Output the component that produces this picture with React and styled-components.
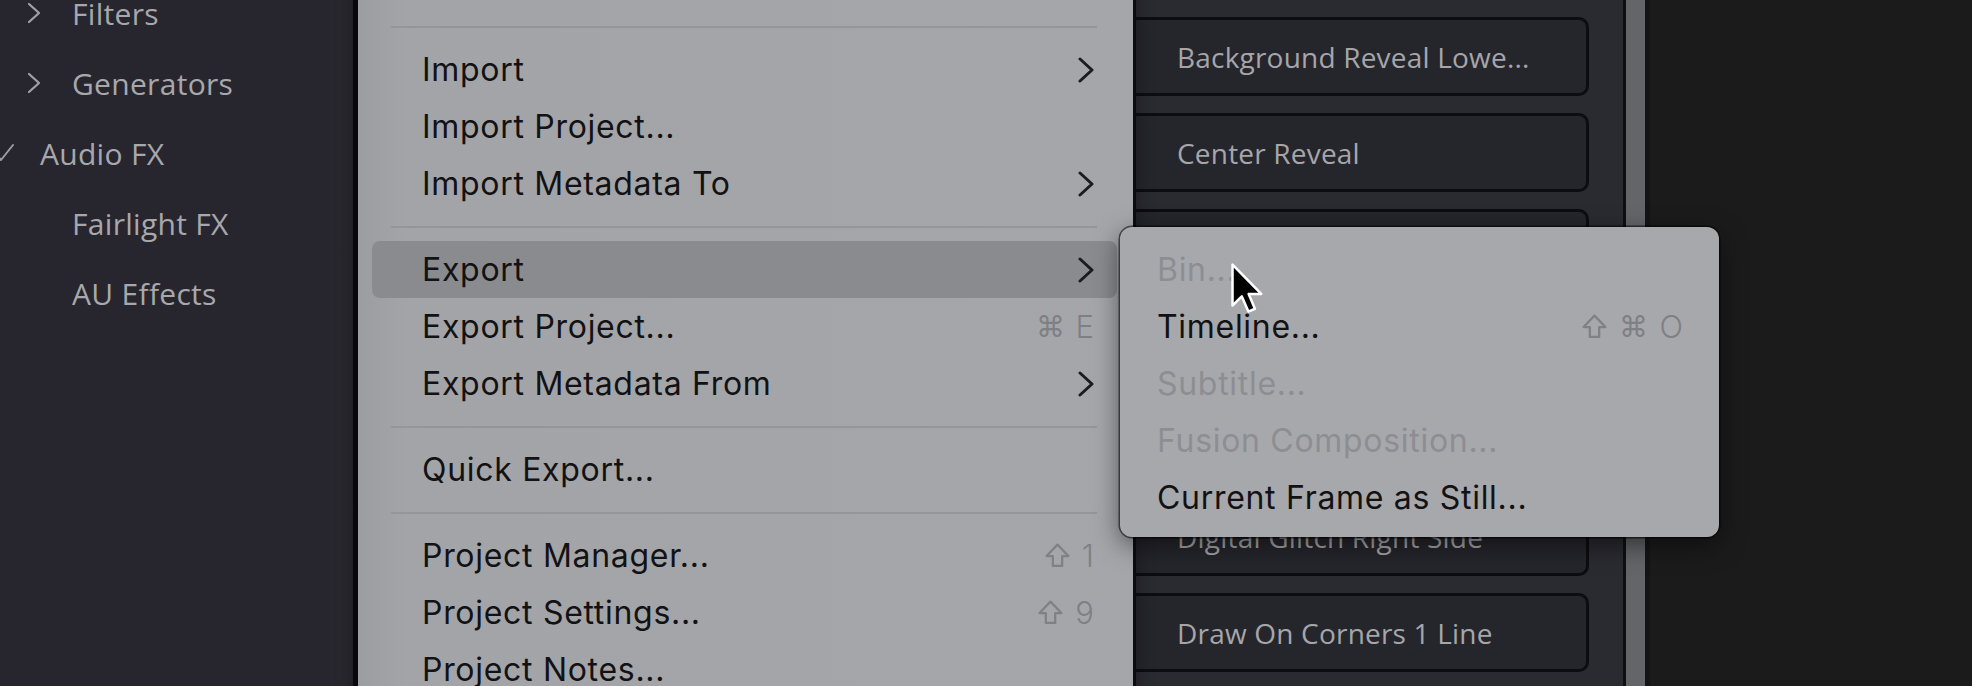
import styled, { createGlobalStyle } from "styled-components";

const GlobalStyle = createGlobalStyle`
  html, body {
    margin: 0;
    padding: 0;
    background: #1b1b1b;
  }
  * {
    box-sizing: border-box;
  }
`;

const SIDEBAR = [
  { label: "Filters", level: 1, icon: "chevron" },
  { label: "Generators", level: 1, icon: "chevron" },
  { label: "Audio FX", level: 0, icon: "check" },
  { label: "Fairlight FX", level: 1 },
  { label: "AU Effects", level: 1 },
];

const CARDS = [
  "Background Reveal Lowe...",
  "Center Reveal",
  "Digital Glitch Left Side",
  "Digital Glitch Lower Third",
  "Digital Glitch Reveal",
  "Digital Glitch Right Side",
  "Draw On Corners 1 Line",
  "Draw On Corners 2 Lines",
];

const MENU = [
  { type: "sep" },
  { label: "Import", submenu: true },
  { label: "Import Project..." },
  { label: "Import Metadata To", submenu: true },
  { type: "sep" },
  { label: "Export", submenu: true, active: true },
  { label: "Export Project...", keys: ["⌘", "E"] },
  { label: "Export Metadata From", submenu: true },
  { type: "sep" },
  { label: "Quick Export..." },
  { type: "sep" },
  { label: "Project Manager...", keys: ["shift", "1"] },
  { label: "Project Settings...", keys: ["shift", "9"] },
  { label: "Project Notes..." },
];

const EXPORT_MENU = [
  { label: "Bin...", disabled: true },
  { label: "Timeline...", keys: ["shift", "⌘", "O"] },
  { label: "Subtitle...", disabled: true },
  { label: "Fusion Composition...", disabled: true },
  { label: "Current Frame as Still..." },
];

function Chevron({ color = "#1c1c1e", w = 16, h = 26, stroke = 3 }) {
  return (
    <svg width={w} height={h} viewBox={`0 0 ${w} ${h}`}>
      <polyline
        points={`2,2 ${w - 2},${h / 2} 2,${h - 2}`}
        fill="none"
        stroke={color}
        strokeWidth={stroke}
        strokeLinecap="round"
        strokeLinejoin="round"
      />
    </svg>
  );
}

function Check() {
  return (
    <svg width="24" height="20" viewBox="0 0 24 20">
      <polyline
        points="6,11 11,17 23,2"
        fill="none"
        stroke="#9d9da1"
        strokeWidth="2"
        strokeLinecap="round"
        strokeLinejoin="round"
      />
    </svg>
  );
}

// outlined shift arrow, as drawn in macOS menus
function ShiftIcon() {
  return (
    <svg width="27" height="27" viewBox="0 0 26 26" aria-label="Shift">
      <path
        d="M13,2.5 L23.5,13.5 L17.5,13.5 L17.5,23 L8.5,23 L8.5,13.5 L2.5,13.5 Z"
        fill="none"
        stroke="#808185"
        strokeWidth="2.2"
        strokeLinejoin="round"
      />
    </svg>
  );
}

function Pointer() {
  return (
    <Cursor width="34" height="52" viewBox="-1 -1 13.5 20.5">
      <path
        d="M0,0 L0,16.2 L3.7,12.6 L6.3,18.6 L8.9,17.5 L6.4,11.6 L11.4,11.6 Z"
        fill="#000"
        stroke="#fff"
        strokeWidth="1"
        strokeLinejoin="round"
      />
    </Cursor>
  );
}

function Keys({ keys }) {
  return (
    <Shortcut>
      {keys.map((k, i) =>
        k === "shift" ? (
          <ShiftIcon key={i} />
        ) : (
          <Key key={i} $glyph={k === "⌘"}>
            {k}
          </Key>
        )
      )}
    </Shortcut>
  );
}

export default function App() {
  return (
    <>
      <GlobalStyle />
      <Page>
        <Sidebar>
          <TreeList>
            {SIDEBAR.map((item) => (
              <TreeRow key={item.label} $level={item.level}>
                <TreeIcon>
                  {item.icon === "chevron" && (
                    <Chevron color="#a2a2a6" w={14} h={22} stroke={2.2} />
                  )}
                  {item.icon === "check" && <Check />}
                </TreeIcon>
                <TreeLabel>{item.label}</TreeLabel>
              </TreeRow>
            ))}
          </TreeList>
        </Sidebar>

        <MiddlePane />

        <EffectsPanel>
          {CARDS.map((name) => (
            <Card key={name}>{name}</Card>
          ))}
        </EffectsPanel>
        <ScrollTrack />
        <Viewer />

        <Menu>
          {MENU.map((item, i) =>
            item.type === "sep" ? (
              <Separator key={i} />
            ) : (
              <MenuRow key={i} $active={item.active}>
                <span>{item.label}</span>
                {item.submenu && <Chevron />}
                {item.keys && <Keys keys={item.keys} />}
              </MenuRow>
            )
          )}
        </Menu>

        <SubMenu>
          {EXPORT_MENU.map((item) => (
            <SubRow key={item.label} $disabled={item.disabled}>
              <span>{item.label}</span>
              {item.keys && <Keys keys={item.keys} />}
            </SubRow>
          ))}
        </SubMenu>

        <Pointer />
      </Page>
    </>
  );
}

const Page = styled.div`
  position: relative;
  width: 1972px;
  height: 686px;
  overflow: hidden;
  display: flex;
  background: #1b1b1b;
`;

const Sidebar = styled.div`
  width: 358px;
  flex-shrink: 0;
  background: linear-gradient(90deg, #27262f 0%, #27262f 91%, #28282d 100%);
  border-right: 5px solid #0b0b0e;
  overflow: hidden;
`;

const TreeList = styled.div`
  display: flex;
  flex-direction: column;
  margin-top: -22px;
  margin-left: -32px;
`;

const TreeRow = styled.div`
  height: 70px;
  display: flex;
  align-items: center;
  gap: 26px;
  padding-left: ${(p) => 22 + p.$level * 32}px;
  font-family: "Open Sans", "Noto Sans", sans-serif;
  font-size: 30px;
  letter-spacing: 0.3px;
  color: #a8a8ac;
`;

const TreeIcon = styled.div`
  width: 24px;
  height: 24px;
  display: flex;
  align-items: center;
  justify-content: center;
`;

const TreeLabel = styled.span`
  white-space: nowrap;
`;

const MiddlePane = styled.div`
  width: 757px;
  flex-shrink: 0;
  background: #1f1f25;
`;

const EffectsPanel = styled.div`
  width: 508px;
  flex-shrink: 0;
  display: flex;
  flex-direction: column;
  gap: 17px;
  padding: 17px 34px 0 0;
  background: #2a2a31;
`;

const Card = styled.div`
  height: 79px;
  flex-shrink: 0;
  display: flex;
  align-items: center;
  padding-left: 59px;
  background: #25252c;
  border: 3px solid #0d0d11;
  border-radius: 10px;
  font-family: "Open Sans", "Noto Sans", sans-serif;
  font-size: 28px;
  letter-spacing: 0.2px;
  color: #a6a6aa;
  white-space: nowrap;
  overflow: hidden;
`;

const ScrollTrack = styled.div`
  width: 27px;
  flex-shrink: 0;
  background: #646569;
  border-left: 3px solid #0f0f12;
  border-right: 5px solid #141416;
`;

const Viewer = styled.div`
  flex: 1;
  background: #1b1b1b;
`;

const Menu = styled.div`
  position: absolute;
  left: 358px;
  top: -40px;
  width: 775px;
  height: 800px;
  padding-top: 52px;
  display: flex;
  flex-direction: column;
  background: linear-gradient(90deg, #9c9da1 0%, #a3a4a8 6%, #a5a6aa 100%);
  box-shadow: 3px 0 0 #0c0c0f, 0 0 20px rgba(0, 0, 0, 0.45);
  font-family: Inter, "Liberation Sans", "DejaVu Sans", sans-serif;
  font-size: 32px;
  letter-spacing: 0.7px;
  color: #121214;
`;

const Separator = styled.div`
  height: 29px;
  flex-shrink: 0;
  display: flex;
  align-items: center;
  padding: 0 36px 0 33px;

  &::after {
    content: "";
    flex: 1;
    height: 2px;
    background: #95969a;
  }
`;

const MenuRow = styled.div`
  height: 57px;
  flex-shrink: 0;
  display: flex;
  align-items: center;
  justify-content: space-between;
  margin: 0 16px 0 14px;
  padding: 0 23px 0 50px;
  border-radius: 8px;
  background: ${(p) => (p.$active ? "#8a8b8f" : "transparent")};
  white-space: nowrap;
`;

const SubMenu = styled.div`
  position: absolute;
  left: 1120px;
  top: 227px;
  width: 599px;
  height: 310px;
  padding-top: 14px;
  display: flex;
  flex-direction: column;
  background: #a7a8ac;
  border-radius: 12px;
  box-shadow: 0 0 0 1.5px rgba(0, 0, 0, 0.55), 0 8px 26px rgba(0, 0, 0, 0.5);
  font-family: Inter, "Liberation Sans", "DejaVu Sans", sans-serif;
  font-size: 32px;
  letter-spacing: 0.7px;
`;

const SubRow = styled.div`
  height: 57px;
  flex-shrink: 0;
  display: flex;
  align-items: center;
  justify-content: space-between;
  padding: 0 36px 0 37px;
  color: ${(p) => (p.$disabled ? "#8d8e92" : "#121214")};
  white-space: nowrap;
`;

const Shortcut = styled.span`
  display: flex;
  align-items: center;
  gap: 11px;
  color: #7f8084;
`;

const Key = styled.span`
  font-family: ${(p) =>
    p.$glyph ? '"DejaVu Sans", sans-serif' : 'Inter, "Liberation Sans", sans-serif'};
  font-size: ${(p) => (p.$glyph ? "29px" : "31px")};
  font-weight: 300;
  letter-spacing: 0;
`;

const Cursor = styled.svg`
  position: absolute;
  left: 1230px;
  top: 262px;
`;
